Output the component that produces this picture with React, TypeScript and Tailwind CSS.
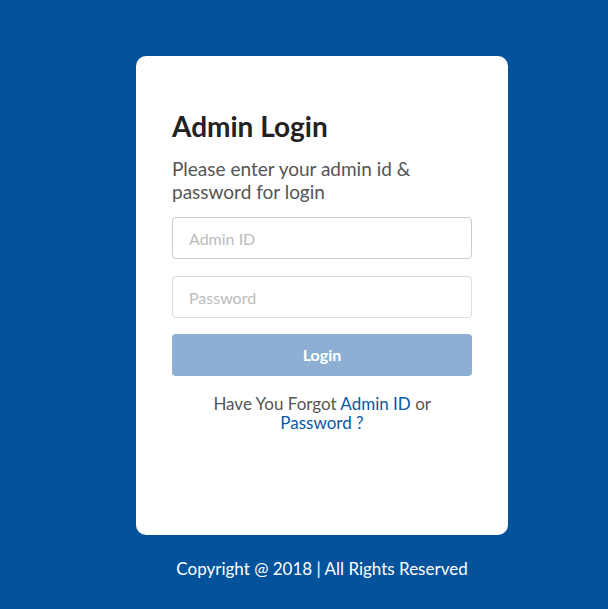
import { useState } from 'react';

const App = () => {
  const [adminId, setAdminId] = useState('');
  const [password, setPassword] = useState('');

  return (
    <div
      className="min-h-screen w-full bg-[#02529c] pt-[56px] pl-[36px] flex flex-col items-center"
      style={{ fontFamily: 'Lato, "Open Sans", sans-serif' }}
    >
      <div className="w-[372px] h-[479px] bg-white rounded-[10px] px-[36px] pt-[52px]">
        <h1 className="text-[28px] leading-[36px] font-bold text-[#222222]">Admin Login</h1>
        <p className="mt-[13px] text-[19px] leading-[23px] text-[#555555]">
          Please enter your admin id &amp; password for login
        </p>
        <input
          type="text"
          placeholder="Admin ID"
          value={adminId}
          onChange={(e) => setAdminId(e.target.value)}
          className="mt-[14px] block w-full h-[42px] px-[16px] text-[16px] text-[#333] placeholder:text-[#bbbbbb] border border-[#cccccc] rounded-[4px] outline-none"
        />
        <input
          type="password"
          placeholder="Password"
          value={password}
          onChange={(e) => setPassword(e.target.value)}
          className="mt-[17px] block w-full h-[42px] px-[16px] text-[16px] text-[#333] placeholder:text-[#bbbbbb] border border-[#dddddd] rounded-[4px] outline-none"
        />
        <button className="mt-[16px] block w-full h-[42px] rounded-[4px] bg-[#8cafd3] text-white text-[16px] font-bold">
          Login
        </button>
        <p className="mx-auto mt-[18px] w-[230px] text-center text-[17px] leading-[19px] text-[#555555]">
          Have You Forgot <a href="#" className="text-[#0b57a4]">Admin ID</a> or{' '}
          <a href="#" className="text-[#0b57a4]">Password ?</a>
        </p>
      </div>
      <p className="mt-[23px] text-[17px] leading-[22px] text-white">Copyright @ 2018 | All Rights Reserved</p>
    </div>
  );
};

export default App;
